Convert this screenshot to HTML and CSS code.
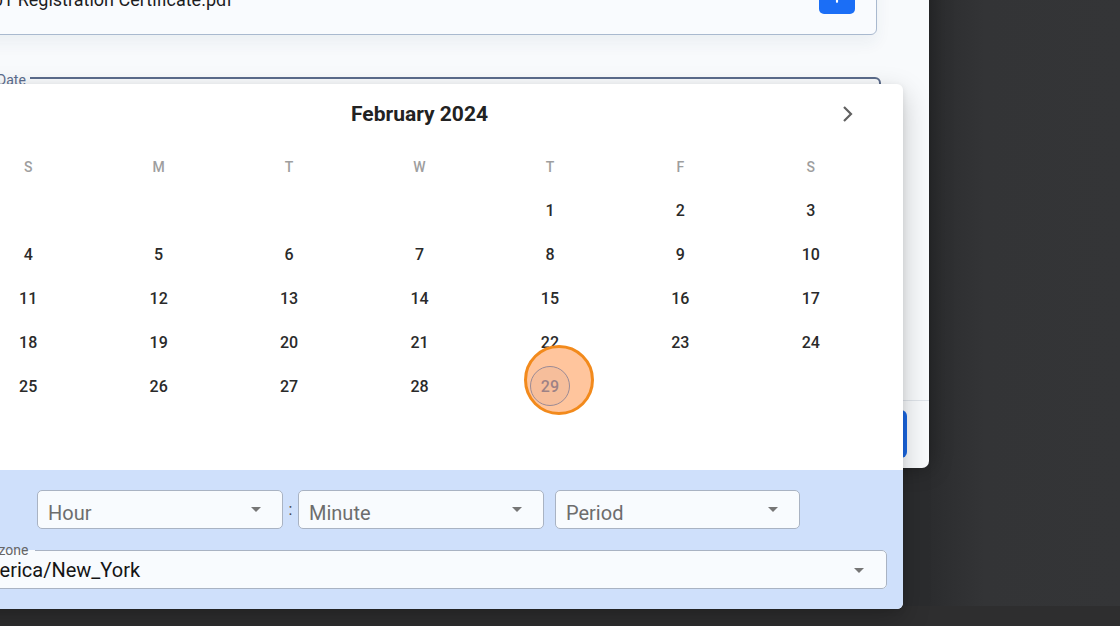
FILE: index.html
```html
<!DOCTYPE html>
<html lang="en">
<head>
<meta charset="utf-8">
<title>Date picker</title>
<link rel="stylesheet" href="styles.css">
</head>
<body>
<div class="stage">
  <div class="modal">
    <div class="modal-body">
      <div class="file-field">
        <span class="file-name">01 Registration Certificate.pdf</span>
        <span class="upload-btn">
          <svg viewBox="0 0 24 24" width="20" height="20"><path d="M12 19V7M7 11l5-5 5 5" fill="none" stroke="#fff" stroke-width="2.6" stroke-linecap="round" stroke-linejoin="round"/></svg>
        </span>
      </div>
      <fieldset class="date-field">
        <legend><span class="legend-text">Date</span></legend>
      </fieldset>
    </div>
    <div class="modal-footer">
      <span class="primary-btn"></span>
    </div>
  </div>

  <div class="popover">
    <div class="cal">
      <div class="cal-head">
        <svg class="nav" viewBox="0 0 24 24" width="24" height="24"><path d="M15 5l-7 7 7 7" fill="none" stroke="#616161" stroke-width="2.2"/></svg>
        <div class="cal-title">February 2024</div>
        <svg class="nav" viewBox="0 0 24 24" width="24" height="24"><path d="M9 5l7 7-7 7" fill="none" stroke="#616161" stroke-width="2.2"/></svg>
      </div>
      <div class="week">
        <span>S</span><span>M</span><span>T</span><span>W</span><span>T</span><span>F</span><span>S</span>
      </div>
      <div class="days">
        <span></span><span></span><span></span><span></span><span>1</span><span>2</span><span>3</span>
        <span>4</span><span>5</span><span>6</span><span>7</span><span>8</span><span>9</span><span>10</span>
        <span>11</span><span>12</span><span>13</span><span>14</span><span>15</span><span>16</span><span>17</span>
        <span>18</span><span>19</span><span>20</span><span>21</span><span>22</span><span>23</span><span>24</span>
        <span>25</span><span>26</span><span>27</span><span>28</span><span><b class="today">29</b></span><span></span><span></span>
      </div>
    </div>
    <div class="time-section">
      <div class="time-row">
        <div class="select"><span class="select-text">Hour</span><i class="caret"></i></div>
        <span class="colon">:</span>
        <div class="select"><span class="select-text">Minute</span><i class="caret"></i></div>
        <div class="select period"><span class="select-text">Period</span><i class="caret"></i></div>
      </div>
      <fieldset class="tz-field">
        <legend>Timezone</legend>
        <div class="tz-inner"><span class="tz-value">America/New_York</span><i class="caret"></i></div>
      </fieldset>
    </div>
  </div>

  <div class="click-marker"></div>
</div>
</body>
</html>
```

FILE: styles.css
```css
html, body {
  margin: 0;
  padding: 0;
}

body {
  font-family: Roboto, "Liberation Sans", Arial, sans-serif;
  background:
    linear-gradient(to bottom, rgba(0,0,0,0) 606px, #2e2e2f 606px),
    linear-gradient(to right, #2b2c2e 929px, #2f3032 955px, #333436 985px, #343537 100%);
  width: 1120px;
  height: 626px;
  overflow: hidden;
}

.stage {
  position: relative;
  width: 1120px;
  height: 626px;
  overflow: hidden;
}

/* ---------- modal ---------- */
.modal {
  position: absolute;
  left: -60px;
  top: -40px;
  width: 989px;
  height: 508px;
  background: #f8fafc;
  border-radius: 7px;
  box-shadow: 0 0 22px rgba(0, 0, 0, 0.35);
  display: flex;
  flex-direction: column;
}

.modal-body {
  padding: 0 48px 0 20px;
}

.file-field {
  height: 75px;
  box-sizing: border-box;
  margin-right: 4px;
  border: 1px solid #a9b9cf;
  border-radius: 6px;
  background: #f9fbfe;
  display: flex;
  justify-content: space-between;
  align-items: center;
  padding: 0 21px 0 32px;
  box-shadow: 0 8px 16px rgba(40, 60, 100, 0.06);
}

.file-name {
  font-size: 18px;
  line-height: 21px;
  padding-top: 4px;
  color: #1d1d1f;
}

.upload-btn {
  align-self: flex-start;
  margin-top: 17px;
  width: 36px;
  height: 36px;
  border-radius: 5px;
  background: #1b6ef6;
  display: flex;
  align-items: center;
  justify-content: center;
}

.date-field {
  margin: 35px 0 0 0;
  padding: 0;
  min-height: 60px;
  border: 2px solid #5b6b8b;
  border-radius: 6px;
  min-inline-size: 0;
}

.date-field legend {
  margin-left: 31px;
  padding: 0 4px;
  font-size: 14px;
  line-height: 15px;
  color: #5b6c8e;
}

.legend-text {
  position: relative;
  top: 3px;
}

.modal-footer {
  margin-top: auto;
  border-top: 1px solid #dfe4ea;
  padding: 9px 22px 10px;
  display: flex;
  justify-content: flex-end;
}

.primary-btn {
  width: 120px;
  height: 48px;
  border-radius: 6px;
  background: #1a67e3;
}

/* ---------- popover ---------- */
.popover {
  position: absolute;
  left: -64px;
  top: 84px;
  width: 967px;
  background: #ffffff;
  border-radius: 6px;
  overflow: hidden;
  box-shadow: 0 10px 28px rgba(0, 0, 0, 0.22), 0 2px 6px rgba(0, 0, 0, 0.08);
}

.cal {
  padding: 15px 27px 62px;
}

.cal-head {
  height: 30px;
  display: flex;
  align-items: center;
  justify-content: space-between;
  padding: 0 17px;
  margin-bottom: 15px;
}

.cal-title {
  font-size: 21px;
  font-weight: 700;
  color: #222222;
}

.week,
.days {
  display: grid;
  grid-template-columns: repeat(7, 1fr);
  grid-auto-rows: 44px;
}

.week span,
.days span {
  display: flex;
  align-items: center;
  justify-content: center;
}

.week span {
  font-size: 14px;
  font-weight: 500;
  color: #9e9e9e;
  padding-top: 2px;
}

.days span {
  font-size: 16px;
  font-weight: 500;
  color: #2a2a2a;
}

.today {
  width: 40px;
  height: 40px;
  box-sizing: border-box;
  border-radius: 50%;
  border: 1px solid #3588ee;
  background: #ecf1fb;
  color: #3a78d0;
  font-weight: 500;
  display: flex;
  align-items: center;
  justify-content: center;
}

/* ---------- time section ---------- */
.time-section {
  background: #cfe0fb;
  padding: 20px 16px 20px 14px;
}

.time-row {
  display: flex;
  justify-content: center;
  align-items: center;
}

.select {
  width: 246px;
  height: 39px;
  box-sizing: border-box;
  border: 1px solid #a9b3c3;
  border-radius: 5px;
  background: #f8fbfe;
  display: flex;
  align-items: center;
  justify-content: space-between;
  padding: 0 21px 0 10px;
}

.select.period {
  width: 245px;
  margin-left: 11px;
}

.select-text {
  font-size: 20px;
  line-height: 23px;
  padding-top: 8px;
  color: #6d6d6d;
}

.caret {
  width: 0;
  height: 0;
  border-left: 5px solid transparent;
  border-right: 5px solid transparent;
  border-top: 5px solid #767676;
}

.colon {
  width: 15px;
  text-align: center;
  font-size: 16px;
  color: #444444;
}

.tz-field {
  margin: 14px 0 0 10px;
  padding: 2px 22px 6px 8px;
  border: 1px solid #a9b3c3;
  border-radius: 5px;
  background: #f8fbfe;
  min-inline-size: 0;
}

.tz-field legend {
  margin-left: -4px;
  padding: 0 7px 0 2px;
  font-size: 14px;
  line-height: 14px;
  color: #666666;
}

.tz-inner {
  display: flex;
  align-items: center;
  justify-content: space-between;
}

.tz-value {
  font-size: 20px;
  line-height: 23px;
  color: #141414;
}

/* ---------- click marker ---------- */
.click-marker {
  position: absolute;
  left: 524px;
  top: 345px;
  width: 70px;
  height: 70px;
  box-sizing: border-box;
  border-radius: 50%;
  border: 3px solid #f28a1c;
  background: rgba(255, 140, 60, 0.5);
}
```
